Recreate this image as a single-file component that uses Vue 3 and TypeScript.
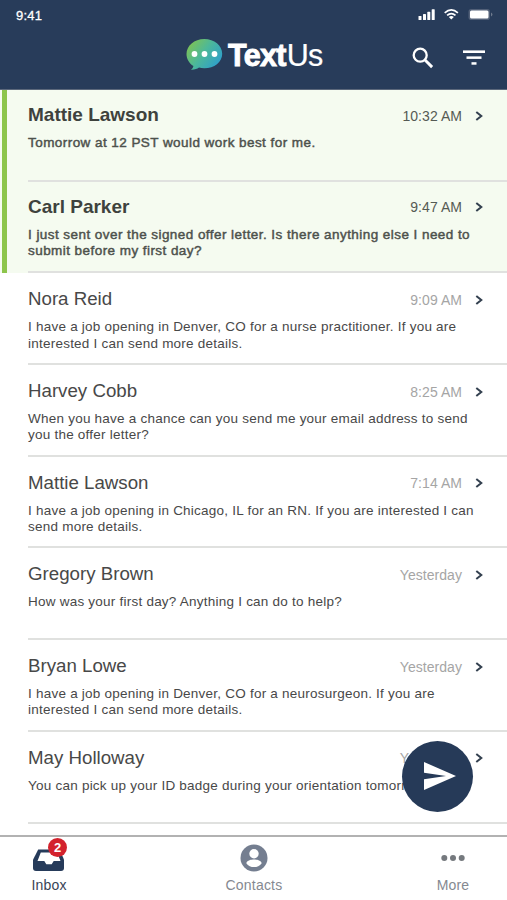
<script setup lang="ts">
interface Conversation {
  name: string
  time: string
  text: string
  unread?: boolean
}

const conversations: Conversation[] = [
  { name: 'Mattie Lawson', time: '10:32 AM', text: 'Tomorrow at 12 PST would work best for me.', unread: true },
  { name: 'Carl Parker', time: '9:47 AM', text: 'I just sent over the signed offer letter. Is there anything else I need to\nsubmit before my first day?', unread: true },
  { name: 'Nora Reid', time: '9:09 AM', text: 'I have a job opening in Denver, CO for a nurse practitioner. If you are\ninterested I can send more details.' },
  { name: 'Harvey Cobb', time: '8:25 AM', text: 'When you have a chance can you send me your email address to send\nyou the offer letter?' },
  { name: 'Mattie Lawson', time: '7:14 AM', text: 'I have a job opening in Chicago, IL for an RN. If you are interested I can\nsend more details.' },
  { name: 'Gregory Brown', time: 'Yesterday', text: 'How was your first day? Anything I can do to help?' },
  { name: 'Bryan Lowe', time: 'Yesterday', text: 'I have a job opening in Denver, CO for a neurosurgeon. If you are\ninterested I can send more details.' },
  { name: 'May Holloway', time: 'Yesterday', text: 'You can pick up your ID badge during your orientation tomorrow.' },
]
</script>

<template>
  <div class="screen">
    <header class="header">
      <div class="status">
        <span class="clock">9:41</span>
        <svg class="status-icons" width="76" height="14" viewBox="0 0 76 14">
          <g fill="#fff">
            <rect x="0.5" y="9" width="3" height="4" rx=".6" />
            <rect x="5" y="7" width="3" height="6" rx=".6" />
            <rect x="9.3" y="4.8" width="3" height="8.200" rx=".6" />
            <rect x="13.700" y="2.200" width="3" height="10.800" rx=".6" />
            <path d="M33.300 12.500l-2.500-2.600q2.500-2 5 0z" />
          </g>
          <path d="M26.700 5.800q6.600-5.800 13.200 0M29.100 8.400q4.200-3.700 8.400 0" fill="none" stroke="#fff" stroke-width="1.700" />
          <rect x="50.500" y="2" width="21.500" height="11" rx="2.800" fill="#526078" />
          <rect x="52" y="3.500" width="18.500" height="8" rx="1.500" fill="#fff" />
          <path d="M73 5.500q3 2 0 4z" fill="#6f7b8e" />
        </svg>
      </div>
      <div class="brandbar">
        <div class="brand">
          <svg class="bubble" width="37" height="33" viewBox="0 0 37 33">
            <defs>
              <linearGradient id="bubbleFill" x1="0" y1="0.200" x2="1" y2="0.850">
                <stop offset="0" stop-color="#80c351" />
                <stop offset=".45" stop-color="#4cb89a" />
                <stop offset="1" stop-color="#299bd3" />
              </linearGradient>
            </defs>
            <path d="M18.300 1C8.300 1 .5 7.700 .5 16c0 5 2.600 9.200 6.900 12-.3 1.700-1.200 2.800-2.400 3.800 3.400.2 6-.8 8-2.200 1.700.5 3.400.7 5.300.7 10 0 17.900-6.300 17.900-14.600S28.300 1 18.300 1z" fill="url(#bubbleFill)" />
            <circle cx="8.500" cy="16" r="2.900" fill="#fff" />
            <circle cx="18.500" cy="16" r="2.900" fill="#fff" />
            <circle cx="28.500" cy="16" r="2.900" fill="#fff" />
          </svg>
          <span class="wordmark"><b>Text</b><span class="us">Us</span></span>
        </div>
        <svg class="search" width="22" height="22" viewBox="0 0 22 22" fill="none" stroke="#fff">
          <circle cx="8.200" cy="8.200" r="6.500" stroke-width="2.300" />
          <path d="M12.800 12.800l7.300 7.300" stroke-width="2.900" />
        </svg>
        <svg class="filter" width="22" height="16" viewBox="0 0 22 16" fill="#fff">
          <rect x="0" y="0.400" width="22" height="2.600" />
          <rect x="3.500" y="6.400" width="15" height="2.500" />
          <rect x="8.500" y="12.200" width="5" height="2.500" />
        </svg>
      </div>
    </header>

    <main class="list">
      <article v-for="(item, i) in conversations" :key="i" class="row" :class="{ unread: item.unread }">
        <div class="content">
          <div class="top">
            <h2 class="name">{{ item.name }}</h2>
            <time class="time">{{ item.time }}</time>
            <svg class="chevron" width="9" height="10" viewBox="0 0 9 10">
              <path d="M1.300 1L6.300 5l-5 4" fill="none" stroke="#33404f" stroke-width="2" />
            </svg>
          </div>
          <p class="message">{{ item.text }}</p>
        </div>
      </article>
    </main>

    <button class="compose" aria-label="New message">
      <svg width="32" height="28" viewBox="0 0 32 28">
        <path d="M0 0L32 14 0 28V17.200L22 14 0 10.800z" fill="#fff" />
      </svg>
    </button>

    <nav class="tabs">
      <div class="tab inbox">
        <div class="icon">
          <svg width="34" height="24" viewBox="0 0 34 24">
            <path d="M6.200 1.500h21.600L32 11.800V20q0 3-3 3H4q-3 0-3-3v-8.200z" fill="#263b5a" />
            <path d="M8.800 4.500h16.400l3.300 8.500h-6.800l-2 3.200h-5.400l-2-3.200H5.500z" fill="#fff" />
          </svg>
          <span class="badge">2</span>
        </div>
        <span class="label">Inbox</span>
      </div>
      <div class="tab contacts">
        <div class="icon">
          <svg width="28" height="28" viewBox="0 0 28 28">
            <circle cx="14" cy="14" r="13.500" fill="#747e90" />
            <circle cx="14" cy="9.700" r="4.700" fill="#fff" />
            <path d="M6.300 19.200c1-3 5-3.600 7.700-3.600s6.700.6 7.700 3.600c-3.700 5.200-11.700 5.200-15.400 0z" fill="#fff" />
          </svg>
        </div>
        <span class="label">Contacts</span>
      </div>
      <div class="tab more">
        <div class="icon">
          <svg width="24" height="8" viewBox="0 0 24 8" fill="#75797e">
            <circle cx="3.300" cy="4" r="3" /><circle cx="12" cy="4" r="3" /><circle cx="20.700" cy="4" r="3" />
          </svg>
        </div>
        <span class="label">More</span>
      </div>
    </nav>
  </div>
</template>

<style>
body {
  margin: 0;
  background: #fff;
}
</style>

<style scoped>
.screen {
  position: relative;
  display: flex;
  flex-direction: column;
  width: 507px;
  height: 900px;
  overflow: hidden;
  background: #fff;
  color: #484848;
  font-family: "Liberation Sans", Arial, sans-serif;
}
.header {
  box-sizing: border-box;
  flex: none;
  height: 90px;
  background: #283c5a;
  border-bottom: 1px solid #5c687b;
  color: #fff;
}
.status {
  display: flex;
  justify-content: space-between;
  height: 30px;
  padding: 0 13px 0 16px;
}
.clock {
  padding-top: 8px;
  font-size: 13px;
  line-height: 16px;
  letter-spacing: 0.2px;
  -webkit-text-stroke: 0.3px #fff;
}
.status-icons {
  margin-top: 7px;
}
.brandbar {
  display: flex;
  align-items: flex-start;
  padding: 0 22px 0 186px;
}
.brand {
  display: flex;
  flex: 1;
}
.bubble {
  margin-top: 8px;
}
.wordmark {
  display: flex;
  margin: 7px 0 0 5px;
  font-size: 30.500px;
  line-height: 36px;
}
.wordmark b {
  letter-spacing: -0.700px;
  -webkit-text-stroke: 0.9px #fff;
}
.us {
  margin-left: 1px;
  letter-spacing: -0.800px;
  -webkit-text-stroke: 0.2px #fff;
}
.search {
  margin: 17px 29px 0 0;
}
.filter {
  margin-top: 20px;
}
.list {
  flex: none;
  height: 745px;
  overflow: hidden;
}
.row {
  box-sizing: border-box;
  height: 91.700px;
  padding-left: 28px;
}
.row.unread {
  background: linear-gradient(90deg, #f5fbf0 2px, #8dc54b 2px, #8dc54b 7px, #f5fbf0 7px);
}
.content {
  box-sizing: border-box;
  height: 100%;
  padding-top: 14px;
  border-bottom: 2px solid #e0e1df;
}
.unread .content {
  padding-top: 13px;
}
.top {
  display: flex;
  align-items: center;
  height: 24px;
  padding-right: 23px;
}
.name {
  flex: 1;
  margin: 0;
  font-size: 18.700px;
  font-weight: 400;
  line-height: 24px;
}
.unread .name {
  font-size: 19px;
  font-weight: 700;
  color: #3e423d;
}
.time {
  padding-top: 1px;
  color: #a5a5a5;
  font-size: 14px;
  letter-spacing: 0.050px;
  line-height: 18px;
}
.unread .time {
  color: #555a54;
}
.chevron {
  margin: 1px 0 0 13px;
}
.message {
  margin: 8px 0 0;
  font-size: 13.500px;
  line-height: 16.300px;
  letter-spacing: 0.230px;
  white-space: pre;
}
.unread .message {
  color: #4d514c;
  -webkit-text-stroke: 0.450px #4d514c;
  letter-spacing: 0.440px;
}
.compose {
  position: absolute;
  left: 402px;
  top: 741px;
  display: flex;
  align-items: center;
  justify-content: center;
  width: 71px;
  height: 71px;
  padding: 0 0 2px 4px;
  border: 0;
  border-radius: 50%;
  background: #263a58;
}
.tabs {
  box-sizing: border-box;
  display: flex;
  height: 66px;
  padding-left: 19px;
  border-top: 2px solid #b2b2b2;
  background: #fff;
  color: #858991;
}
.tab {
  display: flex;
  flex-direction: column;
  align-items: center;
  width: 60px;
}
.contacts {
  margin-left: 145px;
}
.more {
  margin-left: 139px;
}
.icon {
  position: relative;
  display: flex;
  align-items: center;
  justify-content: center;
  height: 41px;
}
.label {
  font-size: 14px;
  line-height: 15px;
  letter-spacing: 0.2px;
}
.inbox {
  color: #384456;
}
.inbox svg {
  margin-top: 4px;
}
.badge {
  position: absolute;
  left: 16px;
  top: 1px;
  width: 19px;
  height: 19px;
  border-radius: 50%;
  background: #d3222d;
  color: #fff;
  font-size: 13px;
  font-weight: 700;
  line-height: 19px;
  text-align: center;
}
</style>
